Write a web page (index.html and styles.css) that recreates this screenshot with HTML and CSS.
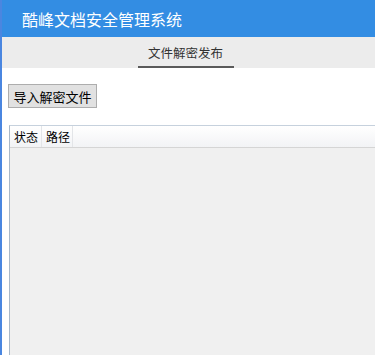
FILE: index.html
```html
<!DOCTYPE html>
<html lang="zh-CN">
<head>
<meta charset="utf-8">
<title>酷峰文档安全管理系统</title>
<link rel="stylesheet" href="styles.css">
</head>
<body>
<div class="app">
  <header class="topbar">
    <h1 class="title">酷峰文档安全管理系统</h1>
  </header>
  <nav class="tabs">
    <div class="tab active">文件解密发布</div>
  </nav>
  <main class="content">
    <div class="toolbar">
      <button class="btn" type="button">导入解密文件</button>
    </div>
    <div class="grid">
      <div class="grid-head">
        <div class="col col-status">状态</div>
        <div class="col col-path">路径</div>
        <div class="col col-fill"></div>
      </div>
      <div class="grid-body"></div>
    </div>
  </main>
</div>
</body>
</html>
```

FILE: styles.css
```css
* { box-sizing: border-box; }
html, body {
  margin: 0;
  padding: 0;
  height: 100%;
  overflow: hidden;
  background: #ffffff;
  font-family: "Noto Sans CJK SC", "Microsoft YaHei", sans-serif;
}
.app {
  height: 100%;
  border-left: 2px solid #4a86e0;
  display: flex;
  flex-direction: column;
}
.topbar {
  height: 37px;
  background: #338de3;
  display: flex;
  align-items: center;
  padding-left: 20px;
}
.title {
  margin: 0;
  font-size: 16px;
  font-weight: normal;
  color: #ffffff;
  line-height: 1;
}
.tabs {
  height: 31px;
  background: #ececec;
  display: flex;
  justify-content: center;
  align-items: flex-end;
  padding-right: 6px;
}
.tab {
  width: 96px;
  height: 31px;
  display: flex;
  align-items: center;
  justify-content: center;
  font-size: 12.5px;
  color: #333333;
  border-bottom: 2px solid #5a5a5a;
  padding-top: 1px;
}
.content {
  flex: 1;
  display: flex;
  flex-direction: column;
  padding: 16px 0 0 6px;
  min-height: 0;
}
.toolbar {
  display: flex;
  height: 41px;
}
.btn {
  height: 24px;
  width: 89px;
  padding: 0;
  margin: 0;
  font-family: inherit;
  font-size: 13px;
  color: #000000;
  background: #e1e1e1;
  border: 1px solid #adadad;
  border-radius: 0;
  line-height: 1;
}
.grid {
  flex: 1;
  border-top: 1px solid #c6d1dd;
  border-left: 1px solid #a9b8c8;
  background: #f0f0f0;
  display: flex;
  flex-direction: column;
  margin-left: 1px;
  margin-right: -10px;
}
.grid-head {
  display: flex;
  height: 22px;
  background: linear-gradient(#ffffff, #f2f3f5);
  border-bottom: 1px solid #d5d5d5;
}
.col {
  font-size: 12px;
  color: #000000;
  display: flex;
  align-items: center;
  padding-left: 4px;
  border-right: 1px solid #e3e5e8;
}
.col-status { width: 32px; }
.col-path { width: 31px; }
.col-fill { flex: 1; border-right: none; }
.grid-body { flex: 1; }
```
